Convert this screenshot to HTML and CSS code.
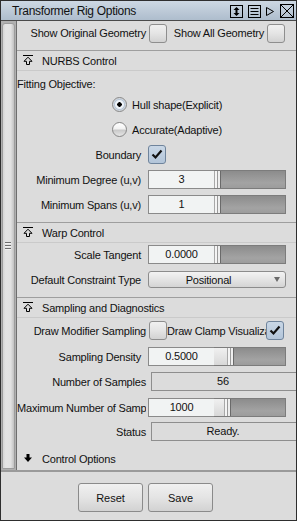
FILE: index.html
```html
<!DOCTYPE html>
<html lang="en">
<head>
  <meta charset="UTF-8">
  <meta name="viewport" content="width=device-width, initial-scale=1.0">
  <title>Transformer Rig Options</title>
  <link rel="stylesheet" href="styles.css">
</head>
<body>
  <div class="window">
    <div class="titlebar">
      <span class="title">Transformer Rig Options</span>
      <svg class="title-icons" width="66" height="16" viewBox="0 0 66 16">
        <rect x="1.5" y="2.5" width="12" height="12" fill="none" stroke="#000"/>
        <line x1="7.5" y1="5" x2="7.5" y2="12" stroke="#000" stroke-width="2"/>
        <polygon points="4.5,7 7.5,4 10.5,7" fill="#000"/>
        <polygon points="4.5,10 7.5,13 10.5,10" fill="#000"/>
        <rect x="19.5" y="2.5" width="12" height="12" fill="none" stroke="#000"/>
        <line x1="21.5" y1="5.5" x2="29.5" y2="5.5" stroke="#000"/>
        <line x1="21.5" y1="8.5" x2="29.5" y2="8.5" stroke="#000"/>
        <line x1="21.5" y1="11.5" x2="29.5" y2="11.5" stroke="#000"/>
        <polygon points="37.5,4.5 44.5,8.5 37.5,12.5" fill="none" stroke="#000"/>
        <rect x="51.5" y="1.5" width="13" height="13" fill="none" stroke="#000"/>
        <line x1="51.5" y1="1.5" x2="64.5" y2="14.5" stroke="#000"/>
        <line x1="64.5" y1="1.5" x2="51.5" y2="14.5" stroke="#000"/>
      </svg>
    </div>

    <div class="main">
      <div class="scrollbar">
        <div class="thumb"><div class="grip"></div></div>
      </div>

      <div class="content">
        <div class="top-row">
          <span class="label tight">Show Original Geometry</span>
          <span class="check"></span>
          <span class="side-label">Show All Geometry</span>
          <span class="check"></span>
        </div>

        <div class="section">
          <div class="section-head">
            <svg class="icon" width="10" height="10" viewBox="0 0 10 10">
              <line x1="0" y1="0.5" x2="10" y2="0.5" stroke="#000"/>
              <path d="M5 2.2 L9 6.3 H6.5 V9.5 H3.5 V6.3 H1 Z" fill="none" stroke="#000"/>
            </svg>
            NURBS Control
          </div>
          <div class="section-body nurbs">
            <div class="plain">Fitting Objective:</div>
            <div class="radio-row first"><span class="radio on"></span>Hull shape(Explicit)</div>
            <div class="radio-row second"><span class="radio"></span>Accurate(Adaptive)</div>
            <div class="row r-boundary">
              <span class="label">Boundary</span>
              <span class="check on">
                <svg width="16" height="17" viewBox="0 0 16 17"><path d="M3.5 8.5 L6.5 11.5 L12.5 4.5" fill="none" stroke="#111" stroke-width="2.2"/></svg>
              </span>
            </div>
            <div class="row">
              <span class="label">Minimum Degree (u,v)</span>
              <span class="field">3</span>
              <span class="slider"><span class="knob"></span></span>
            </div>
            <div class="row">
              <span class="label">Minimum Spans (u,v)</span>
              <span class="field">1</span>
              <span class="slider"><span class="knob"></span></span>
            </div>
          </div>
        </div>

        <div class="section">
          <div class="section-head">
            <svg class="icon" width="10" height="10" viewBox="0 0 10 10">
              <line x1="0" y1="0.5" x2="10" y2="0.5" stroke="#000"/>
              <path d="M5 2.2 L9 6.3 H6.5 V9.5 H3.5 V6.3 H1 Z" fill="none" stroke="#000"/>
            </svg>
            Warp Control
          </div>
          <div class="section-body warp">
            <div class="row r-scale">
              <span class="label">Scale Tangent</span>
              <span class="field">0.0000</span>
              <span class="slider"><span class="knob"></span></span>
            </div>
            <div class="row r-drop">
              <span class="label">Default Constraint Type</span>
              <span class="dropdown"><span class="drop-text">Positional</span><span class="drop-arrow"></span></span>
            </div>
          </div>
        </div>

        <div class="section last">
          <div class="section-head">
            <svg class="icon" width="10" height="10" viewBox="0 0 10 10">
              <line x1="0" y1="0.5" x2="10" y2="0.5" stroke="#000"/>
              <path d="M5 2.2 L9 6.3 H6.5 V9.5 H3.5 V6.3 H1 Z" fill="none" stroke="#000"/>
            </svg>
            Sampling and Diagnostics
          </div>
          <div class="section-body sampling">
            <div class="row r-draw">
              <span class="label tight">Draw Modifier Sampling</span>
              <span class="check"></span>
              <span class="side-label clip">Draw Clamp Visualization</span>
              <span class="check on">
                <svg width="16" height="17" viewBox="0 0 16 17"><path d="M3.5 8.5 L6.5 11.5 L12.5 4.5" fill="none" stroke="#111" stroke-width="2.2"/></svg>
              </span>
            </div>
            <div class="row">
              <span class="label">Sampling Density</span>
              <span class="field">0.5000</span>
              <span class="slider"><span class="fill" style="width: 13px;"></span><span class="knob"></span></span>
            </div>
            <div class="row">
              <span class="label tight">Number of Samples</span>
              <span class="readout">56</span>
            </div>
            <div class="row">
              <span class="label cut">Maximum Number of Samples</span>
              <span class="field">1000</span>
              <span class="slider"><span class="fill" style="width: 10px;"></span><span class="knob"></span></span>
            </div>
            <div class="row r-status">
              <span class="label tight">Status</span>
              <span class="readout">Ready.</span>
            </div>
          </div>
          <div class="section-head closed">
            <svg class="icon" width="10" height="9" viewBox="0 0 10 9">
              <polygon points="3.5,0 6.5,0 6.5,3.5 9,3.5 5,8 1,3.5 3.5,3.5" fill="#000"/>
            </svg>
            Control Options
          </div>
        </div>
      </div>
    </div>

    <div class="footer">
      <button class="btn">Reset</button>
      <button class="btn">Save</button>
    </div>
  </div>
</body>
</html>
```

FILE: styles.css
```css
* {
  box-sizing: border-box;
}
body {
  margin: 0;
  font-family: "Liberation Sans", Arial, sans-serif;
  font-size: 11px;
  letter-spacing: -0.2px;
  color: #111;
  background: #dcdcdc;
}
.window {
  width: 297px;
  height: 521px;
  border: 1px solid #2e2e2e;
  background: #dcdcdc;
  display: flex;
  flex-direction: column;
}
.titlebar {
  height: 20px;
  flex: none;
  border-bottom: 1px solid #4a4a4a;
  background: linear-gradient(#cdd8e3, #aebdcd);
  display: flex;
  align-items: center;
  padding-left: 11px;
}
.title {
  flex: 1;
  font-size: 12px;
  letter-spacing: -0.3px;
  color: #111;
}
.title-icons {
  margin-right: 1px;
}

/* main area: scrollbar + sections */
.main {
  height: 451px;
  flex: none;
  display: flex;
  border-bottom: 2px solid #9a9a9a;
}
.scrollbar {
  width: 16px;
  flex: none;
  background: #b0b0b0;
  border-right: 1px solid #6e6e6e;
  padding: 2px 1px 1px 1px;
}
.thumb {
  height: 446px;
  border: 1px solid #9c9c9c;
  border-radius: 3px 3px 1px 1px;
  background: linear-gradient(to right, #d6d6d6, #e4e4e4 25%, #e2e2e2 70%, #c2c2c2);
  display: flex;
  align-items: center;
  justify-content: center;
}
.grip {
  width: 6px;
  height: 8px;
  margin-left: -1px;
  background: repeating-linear-gradient(#6e6e6e 0, #6e6e6e 1px, #f2f2f2 1px, #f2f2f2 2px, transparent 2px, transparent 3px);
}
.content {
  flex: 1;
  display: flex;
  flex-direction: column;
  overflow: hidden;
}

.top-row {
  height: 30px;
  flex: none;
  display: flex;
  align-items: flex-start;
  padding-top: 3px;
  border-bottom: 1px solid #9e9e9e;
}
.top-row .label,
.top-row .side-label {
  line-height: 19px;
}

.section {
  flex: none;
  border-bottom: 1px solid #9e9e9e;
}
.section.last {
  border-bottom: none;
}
.section-head {
  height: 20px;
  display: flex;
  align-items: center;
  padding-left: 6px;
  border-bottom: 1px solid #cacaca;
}
.section-head .icon {
  margin-right: 9px;
  margin-top: -1px;
}
.section-head.closed {
  height: 23px;
  border-bottom: none;
  padding-top: 1px;
}

.nurbs {
  padding-bottom: 8px;
}
.warp {
  padding-bottom: 9px;
}
.sampling {
  padding-bottom: 6px;
}
.section-body .plain {
  margin-top: 5px;
  height: 17px;
  line-height: 17px;
}

.radio-row {
  height: 15px;
  display: flex;
  align-items: center;
  padding-left: 95px;
}
.radio-row.first {
  margin-top: 4px;
}
.radio-row.second {
  margin-top: 10px;
}
.radio {
  width: 15px;
  height: 15px;
  margin-right: 5px;
  border-radius: 50%;
  border: 1px solid #868686;
  background: linear-gradient(#ffffff, #f2f2f2 45%, #c9c9c9 55%, #e6e6e6);
}
.radio.on {
  background: radial-gradient(circle, #000 0, #000 2px, #eef3f8 2.5px, #eef3f8 4px, #b8c6d6 5px, #e8e8e8 7px);
}

.row {
  height: 19px;
  margin-top: 6px;
  display: flex;
  align-items: center;
}
.row.r-boundary {
  margin-top: 8px;
}
.row.r-scale {
  margin-top: 2px;
}
.row.r-drop {
  margin-top: 7px;
  height: 17px;
}
.row.r-draw {
  margin-top: 3px;
}
.sampling .row + .row {
  margin-top: 7px;
}
.sampling .row:nth-child(3) {
  margin-top: 6px;
}
.sampling .row.r-status {
  margin-top: 5px;
}

.label {
  width: 131px;
  flex: none;
  text-align: right;
  padding-right: 7px;
  white-space: nowrap;
}
.label.tight {
  padding-right: 2px;
}
.label.cut {
  width: 129px;
  margin-right: 2px;
  padding-right: 0;
  overflow: hidden;
}
.side-label {
  width: 99px;
  flex: none;
  text-align: right;
  padding-right: 2px;
  white-space: nowrap;
}
.side-label.clip {
  text-align: left;
  padding-right: 0;
  overflow: hidden;
}

.check {
  width: 18px;
  height: 19px;
  flex: none;
  margin-left: 1px;
  border: 1px solid #8e8e8e;
  border-radius: 3px;
  background: linear-gradient(#f0f0f0, #e4e4e4 50%, #d2d2d2);
}
.check.on {
  margin-left: 0;
  border-color: #6f849c;
  background: linear-gradient(#c9d7e6, #b3c5d9);
}
.check.on svg {
  display: block;
}

.field {
  width: 66px;
  height: 19px;
  flex: none;
  border: 1px solid #8a8a8a;
  border-right: none;
  background: #f1f3f3;
  text-align: center;
  line-height: 17px;
}
.slider {
  width: 72px;
  height: 19px;
  flex: none;
  display: flex;
  border: 1px solid #7c7c7c;
  border-left: none;
  background: linear-gradient(#8c8c8c, #a3a3a3 70%, #9c9c9c);
}
.fill {
  height: 100%;
  background: linear-gradient(#f0f0f0, #d8d8d8);
}
.knob {
  width: 7px;
  height: 100%;
  border-left: 1px solid #a8a8a8;
  border-right: 1px solid #6a6a6a;
  background: linear-gradient(to right, #f4f4f4, #f4f4f4 40%, #9a9a9a 40%, #9a9a9a 60%, #eeeeee 60%);
}

.readout {
  flex: 1;
  height: 19px;
  margin-left: 3px;
  border: 1px solid #8e8e8e;
  border-right: none;
  text-align: center;
  line-height: 17px;
  padding-right: 2px;
}

.dropdown {
  width: 138px;
  height: 17px;
  flex: none;
  display: flex;
  align-items: center;
  border: 1px solid #8c8c8c;
  border-radius: 3px;
  background: linear-gradient(#f3f3f3, #e4e4e4 50%, #d4d4d4);
}
.drop-text {
  flex: 1;
  text-align: center;
}
.drop-arrow {
  width: 0;
  height: 0;
  margin: 0 5px 0 6px;
  border-left: 3px solid transparent;
  border-right: 3px solid transparent;
  border-top: 5px solid #6a6a6a;
}

.footer {
  flex: 1;
  display: flex;
  gap: 5px;
  padding: 11px 0 0 77px;
}
.btn {
  width: 65px;
  height: 29px;
  border: 1px solid #8a8a8a;
  border-radius: 3px;
  background: linear-gradient(#f0f0f0, #e4e4e4 50%, #d2d2d2);
  font-family: "Liberation Sans", Arial, sans-serif;
  font-size: 11px;
  color: #111;
  padding: 0;
}
```
